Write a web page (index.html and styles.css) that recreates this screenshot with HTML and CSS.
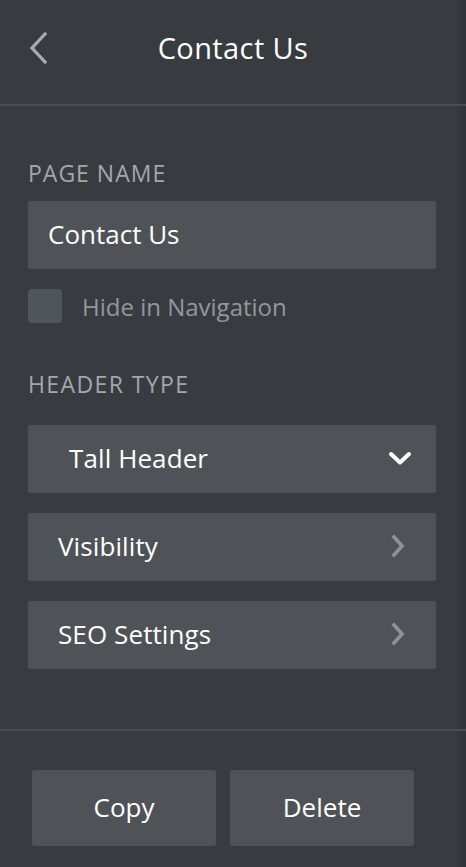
FILE: index.html
```html
<!DOCTYPE html>
<html>
<head>
<meta charset="utf-8">
<link rel="stylesheet" href="styles.css">
</head>
<body>
<div class="panel">
  <header class="topbar">
    <button class="back" aria-label="Back">
      <svg width="20" height="32" viewBox="0 0 20 32"><path d="M17 2 L4 16 L17 30" fill="none" stroke="#a7abae" stroke-width="3.2" stroke-linecap="square"/></svg>
    </button>
    <h1 class="title">Contact Us</h1>
  </header>
  <main class="content">
    <div class="label label-first">PAGE NAME</div>
    <div class="field">Contact Us</div>
    <label class="check">
      <span class="box"></span>
      <span class="check-text">Hide in Navigation</span>
    </label>
    <div class="label label-second">HEADER TYPE</div>
    <div class="row row-select">
      <span class="row-text">Tall Header</span>
      <svg class="chev-down" width="24" height="16" viewBox="0 0 24 16"><path d="M3 4 L12 12.5 L21 4" fill="none" stroke="#ffffff" stroke-width="4" stroke-linecap="round" stroke-linejoin="round"/></svg>
    </div>
    <div class="row row-link">
      <span class="row-text">Visibility</span>
      <svg class="chev-right" width="16" height="24" viewBox="0 0 16 24"><path d="M4 3 L12 12 L4 21" fill="none" stroke="#8e9296" stroke-width="3.6" stroke-linecap="square"/></svg>
    </div>
    <div class="row row-link">
      <span class="row-text">SEO Settings</span>
      <svg class="chev-right" width="16" height="24" viewBox="0 0 16 24"><path d="M4 3 L12 12 L4 21" fill="none" stroke="#8e9296" stroke-width="3.6" stroke-linecap="square"/></svg>
    </div>
  </main>
  <footer class="footer">
    <button class="btn">Copy</button>
    <button class="btn">Delete</button>
  </footer>
</div>
</body>
</html>
```

FILE: styles.css
```css
html, body {
  margin: 0;
  padding: 0;
  background: #383c40;
}
body {
  font-family: "Open Sans", "Lato", sans-serif;
  color: #ffffff;
}
.panel {
  width: 466px;
  height: 867px;
  background: linear-gradient(to right, #383c40 0, #383c40 455px, #2f3236 466px);
  display: flex;
  flex-direction: column;
  overflow: hidden;
}
.topbar {
  position: relative;
  height: 104px;
  border-bottom: 2px solid #4a4e52;
  display: flex;
  align-items: center;
  justify-content: center;
  flex-shrink: 0;
}
.back {
  position: absolute;
  left: 28px;
  top: 32px;
  background: none;
  border: 0;
  padding: 0;
  width: 20px;
  height: 32px;
  cursor: pointer;
}
.back svg { display: block; }
.title {
  margin: 0 0 9px 0;
  font-weight: 400;
  font-size: 29px;
  letter-spacing: 0.4px;
  line-height: 40px;
  color: #ffffff;
}
.content {
  flex: 1;
  padding: 0 30px 0 28px;
  border-bottom: 2px solid #4a4e52;
}
.label {
  font-size: 23px;
  color: #a3a7ab;
  line-height: 24px;
  letter-spacing: 1px;
}
.label-second { letter-spacing: 1.4px; }
.label-first { margin-top: 55px; }
.label-second { margin-top: 49px; }
.field {
  margin-top: 16px;
  height: 68px;
  background: #4f5357;
  border-radius: 3px;
  display: flex;
  align-items: center;
  padding-left: 20px;
  padding-bottom: 3px;
  box-sizing: border-box;
  font-size: 26px;
  color: #ffffff;
}
.check {
  margin-top: 20px;
  display: flex;
  align-items: center;
  gap: 20px;
  height: 34px;
}
.box {
  width: 34px;
  height: 34px;
  border-radius: 4px;
  background: #50555a;
}
.check-text {
  font-size: 24px;
  color: #93979c;
}
.row {
  height: 68px;
  background: #4f5357;
  border-radius: 3px;
  display: flex;
  align-items: center;
  justify-content: space-between;
  margin-top: 20px;
  padding-bottom: 2px;
  box-sizing: border-box;
  font-size: 26px;
  letter-spacing: 0.1px;
}
.row-select {
  margin-top: 29px;
  padding: 0 24px 2px 41px;
}
.row-link {
  padding: 0 30px 2px 30px;
}
.row-text { color: #ffffff; }
.chev-down, .chev-right { display: block; }
.footer {
  height: 136px;
  flex-shrink: 0;
  display: flex;
  gap: 14px;
  padding: 39px 0 0 32px;
  box-sizing: border-box;
}
.btn {
  width: 184px;
  height: 76px;
  background: #4f5357;
  border: 0;
  border-radius: 3px;
  color: #ffffff;
  font-family: inherit;
  font-size: 26px;
  padding-bottom: 3px;
  cursor: pointer;
}
```
